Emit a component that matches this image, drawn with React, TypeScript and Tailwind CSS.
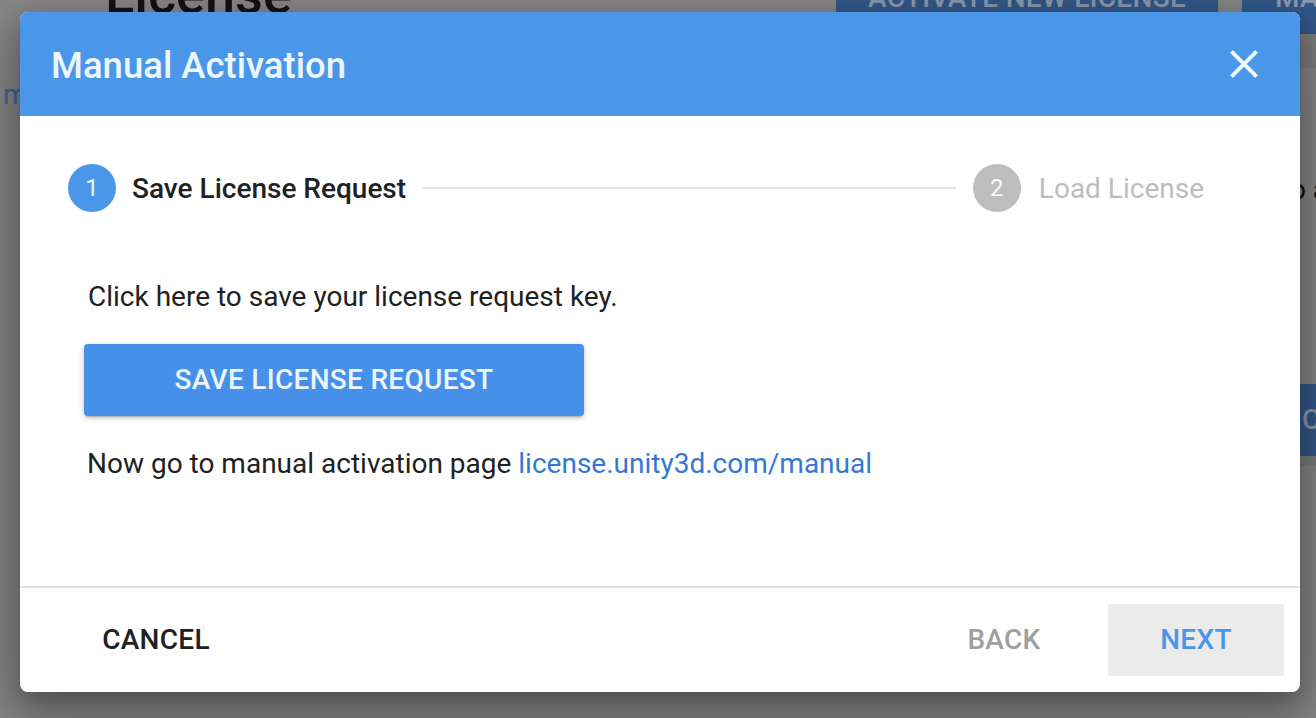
import React from "react";

function CloseIcon() {
  return (
    <svg width="48" height="48" viewBox="0 0 24 24" className="fill-white/90" aria-hidden="true">
      <path d="M19 6.41L17.59 5 12 10.59 6.41 5 5 6.41 10.59 12 5 17.59 6.41 19 12 13.41 17.59 19 19 17.59 13.41 12z" />
    </svg>
  );
}

export default function App() {
  return (
    <div className="relative w-[1316px] h-[718px] overflow-hidden bg-[#888888] font-['Roboto','Liberation_Sans',sans-serif]">
      {/* Page behind the backdrop (already dimmed) */}
      <div className="flex flex-col h-full">
        <div className="flex items-start h-[34px]">
          <h1 className="ml-[105px] mt-[-32px] text-[54px] leading-none font-medium text-[#121212]">License</h1>
          <div className="ml-auto mr-[-40px] flex gap-[24px]">
            <div className="mt-[-38px] h-[72px] w-[382px] rounded-[4px] bg-[#33598a] flex items-center justify-center text-[28px] font-medium uppercase tracking-[0.3px] text-[#8a9bb0]">
              Activate new license
            </div>
            <div className="mt-[-38px] h-[72px] w-[114px] rounded-[4px] bg-[#33598a] flex items-center pl-[33px] text-[28px] font-medium uppercase tracking-[0.3px] text-[#8a9bb0]">
              Manage
            </div>
          </div>
        </div>
        <div className="flex h-[34px]">
          <div className="ml-auto w-[500px] bg-[#7e7e7e]" />
        </div>
        <div className="flex flex-1">
          <div className="w-[1281px] shrink-0 pl-[3px] pt-[6px]">
            <span className="text-[28px] leading-[42px] text-[#3a679c]">manage</span>
          </div>
          <div className="flex-1 min-w-0 flex flex-col">
            <span className="mt-[101px] whitespace-nowrap text-[28px] leading-[42px] text-[#111111]">to a</span>
            <div className="mt-[173px] ml-[7px] h-[72px] w-[200px] shrink-0 bg-[#33598a] flex items-center pl-[14px] text-[28px] font-medium text-[#8a9bb0] border-b-[10px] border-[#7e7e7e] box-content">
              C
            </div>
          </div>
        </div>
      </div>

      {/* Dialog */}
      <div className="absolute left-[20px] top-[12px] w-[1280px] h-[680px] bg-white rounded-[8px] overflow-hidden flex flex-col shadow-[0_22px_60px_10px_rgba(0,0,0,0.28),0_10px_24px_rgba(0,0,0,0.22)]">
        <header className="h-[104px] shrink-0 bg-[#4a97ea] flex items-center justify-between pl-[31px] pr-[32px]">
          <h2 className="pt-[4px] text-[36.5px] leading-none font-medium text-white/90">Manual Activation</h2>
          <button className="flex items-center justify-center" aria-label="Close">
            <CloseIcon />
          </button>
        </header>

        <div className="pt-[48px] pl-[48px] pr-[96px] flex items-center h-[96px] shrink-0 box-border">
          <div className="w-[48px] h-[48px] rounded-full bg-[#4a97ea] flex items-center justify-center text-[24px] leading-none text-white/90">
            1
          </div>
          <span className="ml-[16px] pt-[2px] text-[28px] leading-none font-medium text-[#212121] whitespace-nowrap">
            Save License Request
          </span>
          <div className="flex-1 mx-[16px] h-[2px] bg-[#e3e3e3]" />
          <div className="ml-[1px] w-[48px] h-[48px] rounded-full bg-[#bdbdbd] flex items-center justify-center text-[24px] leading-none text-white/90">
            2
          </div>
          <span className="ml-[18px] pt-[2px] text-[28px] leading-none text-[#bdbdbd] whitespace-nowrap">Load License</span>
        </div>

        <div className="flex-1 flex flex-col items-start pl-[64px]">
          <p className="mt-[64px] pl-[4px] text-[28px] leading-[42px] text-[#212121]">
            Click here to save your license request key.
          </p>
          <button className="mt-[26px] w-[500px] h-[72px] rounded-[4px] bg-[#4690ea] text-[28px] font-medium uppercase tracking-[0.3px] text-white/90 shadow-[0_3px_2px_-2px_rgba(0,0,0,0.2),0_2px_4px_rgba(0,0,0,0.14),0_1px_10px_rgba(0,0,0,0.12)]">
            Save License Request
          </button>
          <p className="mt-[27px] pl-[3px] text-[28px] leading-[42px] text-[#212121]">
            Now go to manual activation page{" "}
            <a className="text-[#3478d4]">license.unity3d.com/manual</a>
          </p>
        </div>

        <div className="h-[2px] shrink-0 bg-[#e0e0e0]" />

        <footer className="h-[104px] shrink-0 flex items-center pl-[48px] pr-[16px]">
          <button className="w-[176px] h-[72px] rounded-[4px] text-[28px] font-medium uppercase tracking-[0.3px] text-[#212121]">
            Cancel
          </button>
          <button className="ml-auto w-[176px] h-[72px] rounded-[4px] text-[28px] font-medium uppercase tracking-[0.3px] text-[#a0a0a0]">
            Back
          </button>
          <button className="ml-[16px] w-[176px] h-[72px] rounded-[4px] bg-[#ebebeb] text-[28px] font-medium uppercase tracking-[0.3px] text-[#4a97ea]">
            Next
          </button>
        </footer>
      </div>
    </div>
  );
}
